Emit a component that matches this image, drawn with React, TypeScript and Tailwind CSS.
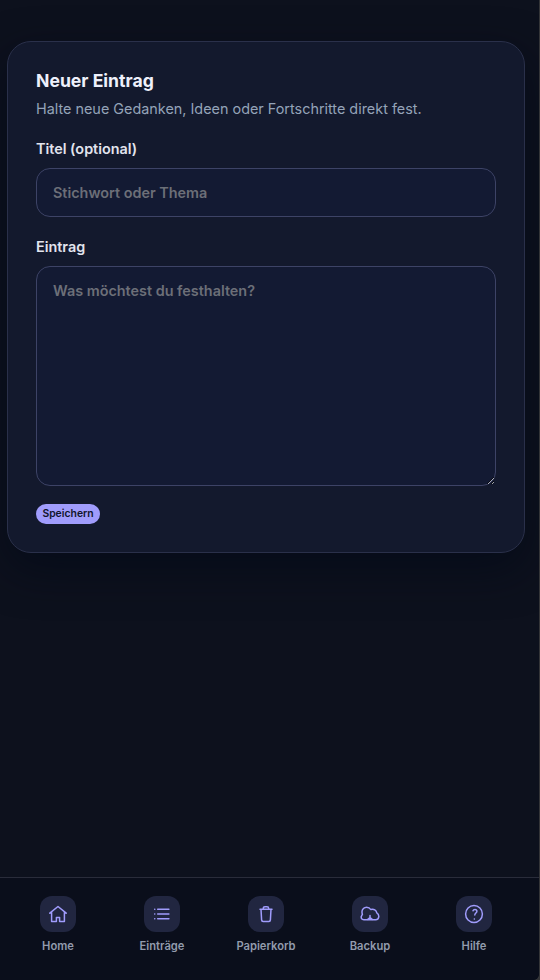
import React from 'react';

const icons: Record<string, React.ReactNode> = {
  home: <path d="M1.8 9.2 10 2.5l8.2 6.7M3.6 8v9.5h4.8v-4.1h3.2v4.1h4.8V8" />,
  list: (
    <>
      <path d="M5.7 5.2H16.9M5.7 10H16.9M5.7 14.8H16.9" />
      <path d="M2.7 5.2h.1M2.7 10h.1M2.7 14.8h.1" />
    </>
  ),
  trash: <path d="M4 5.3h12M7.3 5.1v-.7q0-1.7 1.7-1.7h2q1.7 0 1.7 1.7v.7M5 5.5l.6 10.4q.1 1.5 1.5 1.5h5.8q1.4 0 1.5-1.5L15 5.5" />,
  cloud: (
    <>
      <path d="M3.9 15.8C1.5 15.8.9 14 1.4 12.3c.2-.9.6-1.4 1-1.8C1.1 6.6 3.1 3.2 6.5 3.2c2 0 3.5 1 4.2 2.3 3.2-.9 5.7.6 6.1 3.4 1.7 1 2.2 2.6 1.9 4.3-.3 1.7-1.4 2.6-3 2.6H3.9Z" />
      <path d="M10 11.6v3.5M7.8 15.4 10 13.6l2.2 1.8" />
    </>
  ),
  help: (
    <>
      <circle cx="10" cy="10" r="8.4" />
      <path d="M9 6.8c.3-1 1-1.4 1.9-1.4 1.2 0 2 .8 2 1.8 0 1.8-2.1 1.8-2.1 3.8M10.3 15.1h.1" />
    </>
  ),
};

const tabs = [
  { icon: 'home', label: 'Home' },
  { icon: 'list', label: 'Einträge' },
  { icon: 'trash', label: 'Papierkorb' },
  { icon: 'cloud', label: 'Backup' },
  { icon: 'help', label: 'Hilfe' },
];

const field =
  'block w-full border border-[#3d4366] bg-[#131a33] px-4 text-[14.4px] font-semibold text-[#e5e7eb] outline-none placeholder:text-[#6c6f78] placeholder:opacity-100';

export default function App() {
  return (
    <div className="h-[980px] overflow-hidden bg-[#343538] pr-px font-['Inter',sans-serif]">
      <div className="flex h-full flex-col overflow-hidden rounded-br-[6px] bg-[#0d111d]">
        <main className="flex-1 pl-[7px] pr-[14px] pt-[41px]">
          <section className="h-[512px] rounded-[24px] border border-[#2a304a] bg-[#13192d] px-7 pt-[26px] shadow-[0_16px_44px_rgba(2,8,23,0.6)]">
            <h1 className="text-[17.6px] font-bold leading-[26px] text-[#eef0fb]">Neuer Eintrag</h1>
            <p className="mt-[3px] text-[14.4px] leading-6 text-[#94a3b8]">
              Halte neue Gedanken, Ideen oder Fortschritte direkt fest.
            </p>
            <label className="mt-4 block text-[14.4px] font-semibold leading-6 text-[#e2e4ee]" htmlFor="title">
              Titel (optional)
            </label>
            <input id="title" className={`${field} mt-[7px] h-[49px] rounded-[14px]`} placeholder="Stichwort oder Thema" />
            <label className="mt-[18px] block text-[14.4px] font-semibold leading-6 text-[#e2e4ee]" htmlFor="entry">
              Eintrag
            </label>
            <textarea
              id="entry"
              className={`${field} mt-[7px] h-[220px] resize-y rounded-[14px] py-[13px] leading-[22px] [color-scheme:dark]`}
              placeholder="Was möchtest du festhalten?"
            />
            <button className="mt-[18px] block h-5 w-16 rounded-full bg-[#a09cfc] pb-px text-[10.4px] font-semibold leading-[18px] text-[#10152b]">
              Speichern
            </button>
          </section>
        </main>
        <nav className="grid h-[103px] grid-cols-5 border-t border-[#292c3a] bg-[#0a0e1b] pl-[6px] pr-[13px] pt-[18px]">
          {tabs.map(({ icon, label }) => (
            <a key={icon} className="flex flex-col items-center text-[11.2px] font-semibold leading-4 text-[#929bad]">
              <span className="mb-[6px] flex size-9 items-center justify-center rounded-[12px] bg-[#212640]">
                <svg
                  className="size-5 text-[#a09cfc]"
                  viewBox="0 0 20 20"
                  fill="none"
                  stroke="currentColor"
                  strokeWidth="1.5"
                  strokeLinecap="round"
                  strokeLinejoin="round"
                >
                  {icons[icon]}
                </svg>
              </span>
              {label}
            </a>
          ))}
        </nav>
      </div>
    </div>
  );
}
